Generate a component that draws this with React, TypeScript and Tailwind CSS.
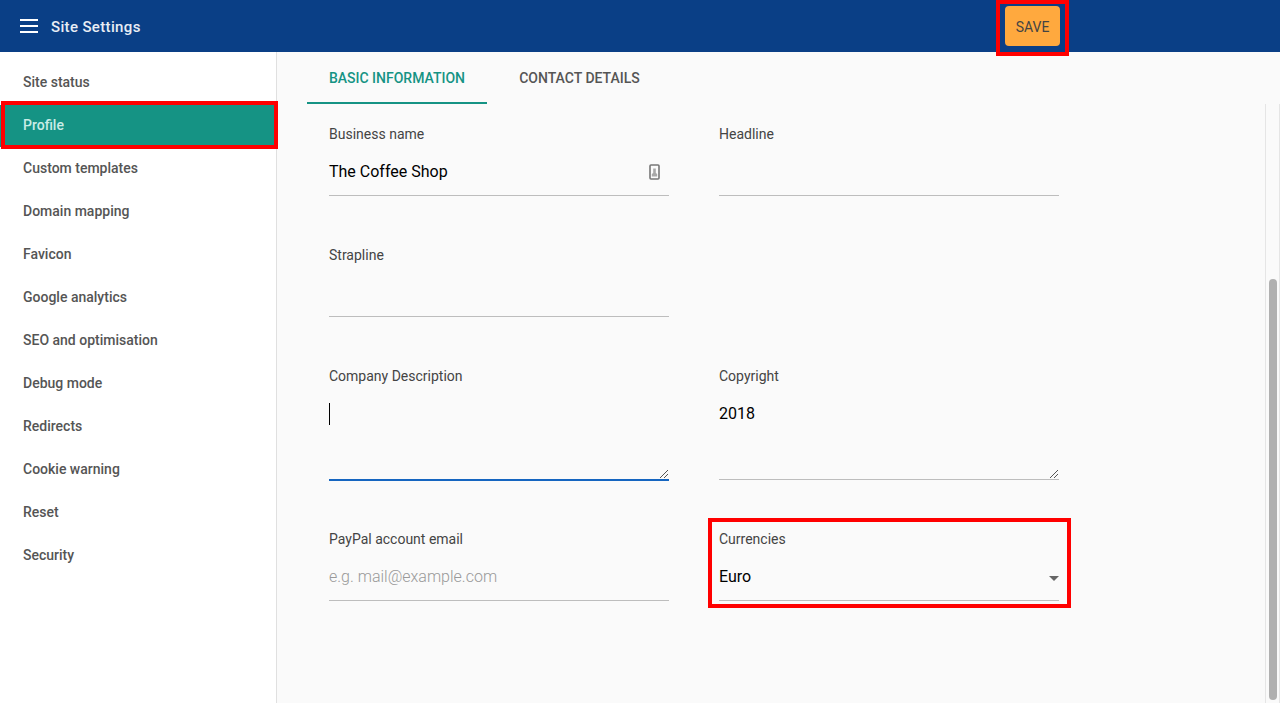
const menuItems = [
  "Site status",
  "Profile",
  "Custom templates",
  "Domain mapping",
  "Favicon",
  "Google analytics",
  "SEO and optimisation",
  "Debug mode",
  "Redirects",
  "Cookie warning",
  "Reset",
  "Security",
];

const ResizeGrip = () => (
  <svg className="absolute right-[1px] bottom-[1px] h-[8px] w-[8px]" viewBox="0 0 8 8">
    <path d="M0 8L8 0M4 8L8 4" stroke="#555" strokeWidth="1" fill="none" />
  </svg>
);

const Field = ({
  label,
  value,
  placeholder,
  icon,
  caret,
}: {
  label: string;
  value?: string;
  placeholder?: string;
  icon?: boolean;
  caret?: boolean;
}) => (
  <div className="w-[340px]">
    <div className="text-[14px] leading-[20px] text-[#444]">{label}</div>
    <div className="relative flex h-[52px] items-start justify-between border-b border-[#bdbdbd] pt-[16px]">
      {value && <span className="text-[16px] leading-[24px] text-black">{value}</span>}
      {placeholder && <span className="text-[16px] leading-[24px] font-light text-[#999]">{placeholder}</span>}
      {icon && (
        <svg className="mt-[4px] mr-[9px] h-[16px] w-[11px]" viewBox="0 0 11 16" fill="none">
          <rect x="1" y="1" width="9" height="14" rx="1" stroke="#777" strokeWidth="1.6" />
          <path d="M2.8 12.5h5.4v-2.6l-1.4-.9V4.5H4.2V9l-1.4.9z" fill="#a8a8a8" />
        </svg>
      )}
      {caret && <span className="absolute top-[27px] right-0 h-0 w-0 border-x-[5px] border-t-[5px] border-x-transparent border-t-[#666]" />}
    </div>
  </div>
);

const TextArea = ({ label, value, focused }: { label: string; value?: string; focused?: boolean }) => (
  <div className="h-[114px] w-[340px]">
    <div className="text-[14px] leading-[20px] text-[#444]">{label}</div>
    <div className={`relative pt-[16px] ${focused ? "h-[95px] border-b-2 border-[#1565c0]" : "h-[94px] border-b border-[#bdbdbd]"}`}>
      {value && <span className="text-[16px] leading-[24px] text-black">{value}</span>}
      {focused && <div className="mt-[1px] h-[22px] w-px bg-black" />}
      <ResizeGrip />
    </div>
  </div>
);

export default function App() {
  return (
    <div className="flex h-[703px] w-[1280px] flex-col overflow-hidden bg-white font-['Roboto',sans-serif]">
      <header className="flex h-[52px] shrink-0 items-center bg-[#0a3f86] pl-[20px] text-white">
        <div className="flex w-[18px] flex-col gap-[4px]">
          <span className="h-[2px] bg-white" />
          <span className="h-[2px] bg-white" />
          <span className="h-[2px] bg-white" />
        </div>
        <span className="mt-[2px] ml-[13px] w-[90px] text-[15px] font-medium tracking-[0.35px] whitespace-nowrap text-[#e8edf5]">Site Settings</span>
        <div className="relative ml-[864px]">
          <button className="flex h-[40px] w-[55px] items-center justify-center rounded-[4px] bg-[#ffa93e] pt-[2px] text-[14px] text-[#444]">
            SAVE
          </button>
          <div className="absolute -inset-x-[9px] -top-[6px] -bottom-[10px] border-4 border-[#ff0000]" />
        </div>
      </header>

      <div className="flex min-h-0 flex-1">
        <nav className="w-[277px] shrink-0 border-r border-[#e0e0e0] bg-white pt-[9px]">
          {menuItems.map((item) =>
            item === "Profile" ? (
              <div key={item} className="relative flex h-[43px] items-center">
                <div className="flex h-[42px] w-full items-center bg-[#159384] pl-[23px] text-[14px] font-medium text-[#c9ece6]">
                  {item}
                </div>
                <div className="absolute -top-[3px] -right-[2px] -bottom-[2px] left-px border-4 border-[#ff0000]" />
              </div>
            ) : (
              <div key={item} className="flex h-[43px] items-center pl-[23px] text-[14px] font-medium text-[#555]">
                {item}
              </div>
            ),
          )}
        </nav>

        <main className="flex min-w-0 flex-1 bg-[#fafafa]">
          <div className="min-w-0 flex-1">
            <div className="flex h-[52px] pl-[30px] text-[14px] font-medium">
              <div className="flex w-[180px] items-center justify-center border-b-2 border-[#159384] pt-[2px] text-[#159384]">
                BASIC INFORMATION
              </div>
              <div className="flex w-[185px] items-center justify-center text-[#555]">CONTACT DETAILS</div>
            </div>

            <div className="flex flex-col gap-[49px] pt-[20px] pl-[52px]">
              <div className="flex gap-[50px]">
                <Field label="Business name" value="The Coffee Shop" icon />
                <Field label="Headline" />
              </div>
              <Field label="Strapline" />
              <div className="flex gap-[50px]">
                <TextArea label="Company Description" focused />
                <TextArea label="Copyright" value="2018" />
              </div>
              <div className="flex gap-[50px]">
                <Field label="PayPal account email" placeholder="e.g. mail@example.com" />
                <div className="relative">
                  <Field label="Currencies" value="Euro" caret />
                  <div className="absolute -top-[11px] -right-[12px] -bottom-[7px] -left-[11px] border-4 border-[#ff0000]" />
                </div>
              </div>
            </div>
          </div>

          <div className="mt-[52px] w-[15px] shrink-0 border-x border-[#e5e5e5] pl-[3px]">
            <div className="mt-[175px] h-[421px] w-[8px] rounded-full bg-[#b0b0b0]" />
          </div>
        </main>
      </div>
    </div>
  );
}
